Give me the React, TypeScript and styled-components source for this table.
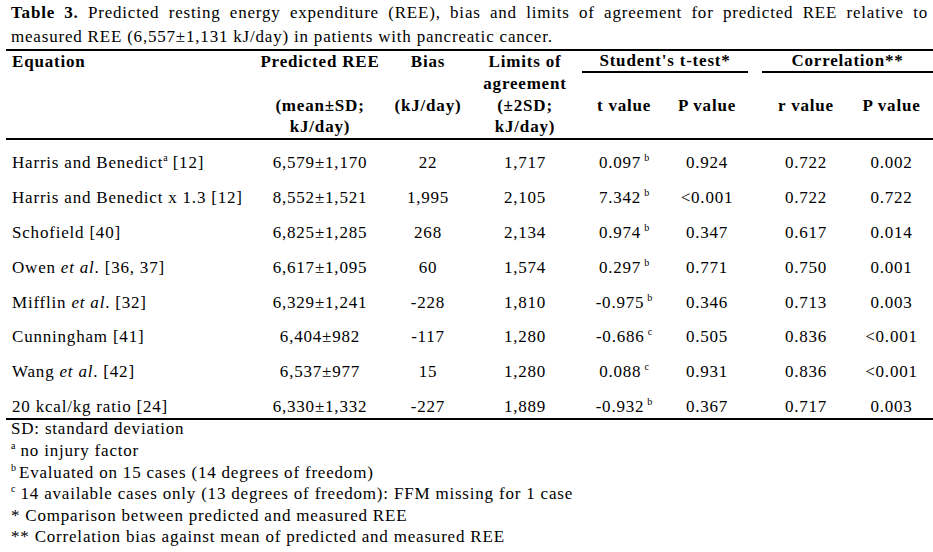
import React, { FC } from "react";
import styled, { createGlobalStyle } from "styled-components";

const GlobalStyle = createGlobalStyle`
  body {
    margin: 0;
    background: #fff;
    color: #000;
    font-family: "Liberation Serif", "Times New Roman", serif;
    font-size: 17px;
    letter-spacing: 0.8px;
  }
`;

const COLS = "246px 136px 80px 114px 84px 82px 14px 88px 83px";

const Page = styled.div`
  padding-top: 1px;
  width: 933px;
`;

const Caption = styled.p`
  margin: 0 5px 0 11px;
  line-height: 24px;
  text-align: justify;
`;

const Table = styled.div`
  margin-left: 6px;
  width: 927px;
`;

const Head = styled.div`
  display: grid;
  grid-template-columns: ${COLS};
  grid-template-rows: repeat(4, 21.75px);
  border-top: 2px solid #000;
  border-bottom: 2px solid #000;
  font-weight: bold;
  line-height: 21.75px;
`;

const HeadCell = styled.div<{ $col: string; $row?: string; $left?: boolean }>`
  grid-column: ${(p) => p.$col};
  grid-row: ${(p) => p.$row ?? "1 / 5"};
  text-align: ${(p) => (p.$left ? "left" : "center")};
  padding-left: ${(p) => (p.$left ? "6px" : "0")};
  white-space: nowrap;
`;

const Group = styled.div<{ $col: string }>`
  grid-column: ${(p) => p.$col};
  grid-row: 1;
  text-align: center;
  border-bottom: 2px solid #000;
  line-height: 19.75px;
`;

const Body = styled.div`
  border-bottom: 2px solid #000;
`;

const Row = styled.div`
  display: grid;
  grid-template-columns: ${COLS};
  height: 34.8px;
  align-items: end;
  line-height: 18px;
  padding-bottom: 2.4px;
  box-sizing: border-box;
`;

const Cell = styled.div<{ $left?: boolean }>`
  text-align: ${(p) => (p.$left ? "left" : "center")};
  padding-left: ${(p) => (p.$left ? "6px" : "0")};
  white-space: nowrap;
`;

const Sup = styled.sup<{ $gap?: boolean; $after?: boolean }>`
  font-size: 10px;
  letter-spacing: 0;
  line-height: 0;
  vertical-align: 0;
  position: relative;
  top: -7px;
  margin-left: ${(p) => (p.$gap ? "3px" : "0")};
  margin-right: ${(p) => (p.$after ? "3px" : "0")};
`;

const Notes = styled.div`
  margin: -2px 0 0 11px;
  line-height: 21.6px;
`;

const Note = styled.div``;

type Line = {
  eq: React.ReactNode;
  pred: string;
  bias: string;
  limits: string;
  t: string;
  tSup: string;
  p: string;
  r: string;
  rp: string;
};

const rows: Line[] = [
  { eq: <>Harris and Benedict<Sup>a</Sup> [12]</>, pred: "6,579±1,170", bias: "22", limits: "1,717", t: "0.097", tSup: "b", p: "0.924", r: "0.722", rp: "0.002" },
  { eq: "Harris and Benedict x 1.3 [12]", pred: "8,552±1,521", bias: "1,995", limits: "2,105", t: "7.342", tSup: "b", p: "<0.001", r: "0.722", rp: "0.722" },
  { eq: "Schofield [40]", pred: "6,825±1,285", bias: "268", limits: "2,134", t: "0.974", tSup: "b", p: "0.347", r: "0.617", rp: "0.014" },
  { eq: <>Owen <i>et al</i>. [36, 37]</>, pred: "6,617±1,095", bias: "60", limits: "1,574", t: "0.297", tSup: "b", p: "0.771", r: "0.750", rp: "0.001" },
  { eq: <>Mifflin <i>et al</i>. [32]</>, pred: "6,329±1,241", bias: "-228", limits: "1,810", t: "-0.975", tSup: "b", p: "0.346", r: "0.713", rp: "0.003" },
  { eq: "Cunningham [41]", pred: "6,404±982", bias: "-117", limits: "1,280", t: "-0.686", tSup: "c", p: "0.505", r: "0.836", rp: "<0.001" },
  { eq: <>Wang <i>et al</i>. [42]</>, pred: "6,537±977", bias: "15", limits: "1,280", t: "0.088", tSup: "c", p: "0.931", r: "0.836", rp: "<0.001" },
  { eq: "20 kcal/kg ratio [24]", pred: "6,330±1,332", bias: "-227", limits: "1,889", t: "-0.932", tSup: "b", p: "0.367", r: "0.717", rp: "0.003" },
];

const Multi: FC<{ lines: string[] }> = ({ lines }) => (
  <>
    {lines.map((l, idx) => (
      <div key={`line_${idx}`}>{l || "\u00a0"}</div>
    ))}
  </>
);

const App: FC = () => {
  return (
    <Page>
      <GlobalStyle />
      <Caption>
        <b>Table 3.</b> Predicted resting energy expenditure (REE), bias and
        limits of agreement for predicted REE relative to measured REE
        (6,557±1,131 kJ/day) in patients with pancreatic cancer.
      </Caption>
      <Table>
        <Head>
          <HeadCell $col="1" $left>
            Equation
          </HeadCell>
          <HeadCell $col="2">
            <Multi lines={["Predicted REE", "", "(mean±SD;", "kJ/day)"]} />
          </HeadCell>
          <HeadCell $col="3">
            <Multi lines={["Bias", "", "(kJ/day)"]} />
          </HeadCell>
          <HeadCell $col="4">
            <Multi lines={["Limits of", "agreement", "(±2SD;", "kJ/day)"]} />
          </HeadCell>
          <Group $col="5 / 7">Student's t-test*</Group>
          <HeadCell $col="5" $row="3">
            t value
          </HeadCell>
          <HeadCell $col="6" $row="3">
            P value
          </HeadCell>
          <Group $col="8 / 10">Correlation**</Group>
          <HeadCell $col="8" $row="3">
            r value
          </HeadCell>
          <HeadCell $col="9" $row="3">
            P value
          </HeadCell>
        </Head>
        <Body>
          {rows.map((row, idx) => (
            <Row key={`Row_${idx}`}>
              <Cell $left>{row.eq}</Cell>
              <Cell>{row.pred}</Cell>
              <Cell>{row.bias}</Cell>
              <Cell>{row.limits}</Cell>
              <Cell>
                {row.t}
                <Sup $gap>{row.tSup}</Sup>
              </Cell>
              <Cell>{row.p}</Cell>
              <Cell />
              <Cell>{row.r}</Cell>
              <Cell>{row.rp}</Cell>
            </Row>
          ))}
        </Body>
      </Table>
      <Notes>
        <Note>SD: standard deviation</Note>
        <Note>
          <Sup>a</Sup> no injury factor
        </Note>
        <Note>
          <Sup $after>b</Sup>Evaluated on 15 cases (14 degrees of freedom)
        </Note>
        <Note>
          <Sup>c</Sup> 14 available cases only (13 degrees of freedom): FFM
          missing for 1 case
        </Note>
        <Note>* Comparison between predicted and measured REE</Note>
        <Note>** Correlation bias against mean of predicted and measured REE</Note>
      </Notes>
    </Page>
  );
};

export default App;
